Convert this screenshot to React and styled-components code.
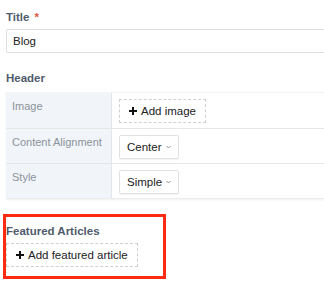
import React from "react";
import styled, { createGlobalStyle } from "styled-components";

const Global = createGlobalStyle`
  html, body { margin: 0; padding: 0; background: #fff; }
  body { font-family: "Liberation Sans", Arial, sans-serif; overflow: hidden; }
  * { box-sizing: border-box; }
`;

const Page = styled.div`
  width: 324px;
  height: 299px;
  padding: 10px 0 0 6px;
  display: flex;
  flex-direction: column;
  overflow: hidden;
`;

const Field = styled.div`
  display: flex;
  flex-direction: column;
  margin-bottom: ${(p) => p.$mb || 0}px;
`;

const Label = styled.div`
  font-size: 11.5px;
  font-weight: 700;
  color: #4f5b6c;
  line-height: 14px;
  margin-bottom: ${(p) => p.$mb || 7}px;
  white-space: nowrap;
`;

const Required = styled.span`
  color: #e0533d;
  margin-left: 5px;
`;

const TextInput = styled.div`
  width: 330px;
  height: 24px;
  border: 1px solid #dedede;
  border-radius: 2px;
  padding: 0 6px;
  font-size: 11.5px;
  line-height: 22px;
  color: #222;
`;

const Table = styled.div`
  width: 330px;
  border-top: 1px solid #f4f4f4;
  box-shadow: 0 1px 2px rgba(0, 0, 0, 0.06);
  display: flex;
  flex-direction: column;
`;

const Row = styled.div`
  display: grid;
  grid-template-columns: 106px 1fr;
  height: ${(p) => p.$h || 35}px;
  border-bottom: 1px solid #e6e6e6;
  &:last-child { border-bottom: 1px solid #ececec; }
`;

const RowLabel = styled.div`
  background: #f1f4f8;
  border-right: 1px solid #e2e5ea;
  padding: 7px 6px 0;
  font-size: 11px;
  line-height: 13px;
  color: #8b939d;
  white-space: nowrap;
`;

const RowValue = styled.div`
  padding: ${(p) => p.$pt || 6}px 0 0 7px;
  display: flex;
  align-items: flex-start;
`;

const DashedButton = styled.div`
  display: inline-flex;
  align-items: center;
  align-self: flex-start;
  height: 24px;
  padding: 0 9px 0 9px;
  border: 1px dashed #cfcfcf;
  font-size: 11.5px;
  color: #222;
  white-space: nowrap;
  gap: 4px;
`;

const Select = styled.div`
  display: inline-flex;
  align-items: center;
  height: 24px;
  padding: 0 7px 0 7px;
  border: 1px solid #e2e2e2;
  border-radius: 2px;
  box-shadow: 0 1px 1px rgba(0, 0, 0, 0.05);
  font-size: 11.5px;
  color: #222;
  gap: 4px;
`;

const Highlight = styled.div`
  position: relative;
  display: flex;
  flex-direction: column;
  padding-top: 10px;
  &::after {
    content: "";
    position: absolute;
    left: -3px;
    top: 0;
    width: 157px;
    height: 59px;
    border: 3px solid #ff2a12;
    pointer-events: none;
  }
`;

const Plus = () => (
  <svg width="8" height="8" viewBox="0 0 8 8">
    <path d="M4 0v8M0 4h8" stroke="#111" strokeWidth="2" />
  </svg>
);

const Chevron = () => (
  <svg width="5" height="4" viewBox="0 0 5 4">
    <path d="M0.5 1L2.5 3L4.5 1" stroke="#777" strokeWidth="0.8" fill="none" />
  </svg>
);

export default function App() {
  return (
    <>
      <Global />
      <Page>
        <Field $mb={18}>
          <Label $mb={5}>
            Title<Required>*</Required>
          </Label>
          <TextInput>Blog</TextInput>
        </Field>
        <Field $mb={15}>
          <Label $mb={7}>Header</Label>
          <Table>
            <Row $h={36}>
              <RowLabel>Image</RowLabel>
              <RowValue $pt={6}>
                <DashedButton>
                  <Plus />
                  Add image
                </DashedButton>
              </RowValue>
            </Row>
            <Row>
              <RowLabel>Content Alignment</RowLabel>
              <RowValue>
                <Select>
                  Center <Chevron />
                </Select>
              </RowValue>
            </Row>
            <Row>
              <RowLabel>Style</RowLabel>
              <RowValue>
                <Select>
                  Simple <Chevron />
                </Select>
              </RowValue>
            </Row>
          </Table>
        </Field>
        <Highlight>
          <Label $mb={5}>Featured Articles</Label>
          <DashedButton>
            <Plus />
            Add featured article
          </DashedButton>
        </Highlight>
      </Page>
    </>
  );
}
